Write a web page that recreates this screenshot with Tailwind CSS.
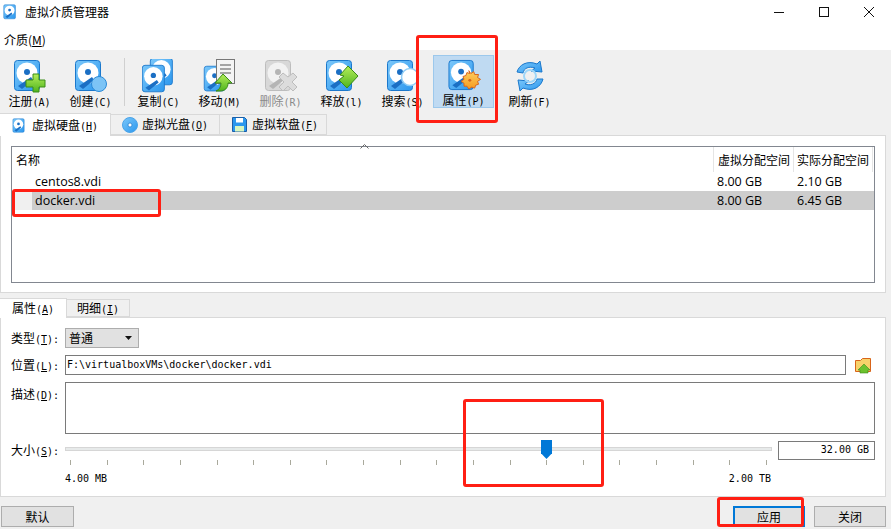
<!DOCTYPE html>
<html lang="zh">
<head>
<meta charset="utf-8">
<script src="https://cdn.jsdelivr.net/npm/@tailwindcss/browser@4"></script>
</head>
<body class="relative w-[891px] h-[529px] overflow-hidden bg-[#f0f0f0] text-[12px] leading-none text-black font-['Noto_Sans_CJK_SC','Noto_Sans',sans-serif]">
<svg class="absolute w-0 h-0">
  <defs>
    <linearGradient id="g" x1="0" y1="0" x2="1" y2="1"><stop offset="0" stop-color="#7cc8fa"/><stop offset="1" stop-color="#2b97ee"/></linearGradient>
    <linearGradient id="gr" x1="0" y1="0" x2="0" y2="1"><stop offset="0" stop-color="#b5ee5a"/><stop offset="1" stop-color="#4fb41e"/></linearGradient>
    <linearGradient id="o" x1="0" y1="0" x2="0" y2="1"><stop offset="0" stop-color="#ffd060"/><stop offset="1" stop-color="#f59a20"/></linearGradient>
    <symbol id="disk" viewBox="0 0 34 34">
      <rect x="1.5" y="1.5" width="25" height="30" rx="3" fill="url(#g)" stroke="#1b78cc"/>
      <circle cx="14" cy="14" r="10.5" fill="#fff"/>
      <circle cx="14" cy="13" r="3" fill="#1b6fc4"/>
      <path d="M5 27 L18 18 L20 21 L9 30 Z" fill="#1b6fc4"/>
    </symbol>
  </defs>
</svg>

<!-- title bar -->
<header class="h-[30px] bg-white flex items-center pl-[3px] pb-[6px] gap-[6px]">
  <svg class="w-[16px] h-[16px]" viewBox="0 0 34 34"><use href="#disk"/></svg>
  <span>虚拟介质管理器</span>
  <div class="ml-auto flex items-center mr-[17px] gap-[35px]">
    <svg class="w-[10px] h-[10px]" viewBox="0 0 10 10"><path d="M0 5.5H10" stroke="#111" fill="none"/></svg>
    <svg class="w-[10px] h-[10px]" viewBox="0 0 10 10"><rect x=".5" y=".5" width="9" height="9" stroke="#111" fill="none"/></svg>
    <svg class="w-[10px] h-[10px]" viewBox="0 0 10 10"><path d="M0 0L10 10M10 0L0 10" stroke="#111" fill="none"/></svg>
  </div>
</header>
<!-- menu -->
<nav class="h-[20px] bg-white pl-[4px] flex items-center"><span>介质(<span class="underline">M</span>)</span></nav>

<!-- toolbar -->
<div class="h-[63px] flex pt-[5px] items-start ml-[-1px]">
  <div class="w-[61px] h-[53px] flex flex-col items-center pt-[4px]">
    <svg class="w-[34px] h-[34px]" viewBox="0 0 34 34"><use href="#disk"/><path d="M20 15h6v6h6v7h-6v5h-6v-5h-7v-7h7z" fill="url(#gr)" stroke="#3b8c18"/></svg>
    <span class="mt-[2px] whitespace-nowrap">注册<span class="font-['DejaVu_Sans_Mono'] text-[10px]">(A)</span></span>
  </div>
  <div class="w-[61px] h-[53px] flex flex-col items-center pt-[4px]">
    <svg class="w-[34px] h-[34px]" viewBox="0 0 34 34"><use href="#disk"/><circle cx="25" cy="25" r="7.5" fill="#7cc4f6" stroke="#2b8ad8"/></svg>
    <span class="mt-[2px] whitespace-nowrap">创建<span class="font-['DejaVu_Sans_Mono'] text-[10px]">(C)</span></span>
  </div>
  <div class="w-[1px] h-[48px] bg-[#d0d0d0] ml-[3px] mr-[3px] mt-[3px]"></div>
  <div class="w-[61px] h-[53px] flex flex-col items-center pt-[4px]">
    <svg class="w-[34px] h-[34px]" viewBox="0 0 34 34"><svg x="7" y="-2" width="30" height="30" viewBox="0 0 34 34"><use href="#disk"/></svg><svg x="-1" y="5" width="30" height="30" viewBox="0 0 34 34"><use href="#disk"/></svg></svg>
    <span class="mt-[2px] whitespace-nowrap">复制<span class="font-['DejaVu_Sans_Mono'] text-[10px]">(C)</span></span>
  </div>
  <div class="w-[61px] h-[53px] flex flex-col items-center pt-[4px]">
    <svg class="w-[34px] h-[34px]" viewBox="0 0 34 34"><svg x="0" y="6" width="28" height="28" viewBox="0 0 34 34"><use href="#disk"/></svg><rect x="13.5" y=".5" width="18" height="24" fill="#f4f4f4" stroke="#777"/><path d="M17 6h11M17 10h11M17 14h11" stroke="#555"/><path d="M12 24l8-9 9 9h-4c0 5-3 8-8 8h-4c3-1 5-4 5-8z" fill="url(#gr)" stroke="#3b8c18"/></svg>
    <span class="mt-[2px] whitespace-nowrap">移动<span class="font-['DejaVu_Sans_Mono'] text-[10px]">(M)</span></span>
  </div>
  <div class="w-[61px] h-[53px] flex flex-col items-center pt-[4px] text-[#8a8a8a]">
    <svg class="w-[34px] h-[34px]" viewBox="0 0 34 34"><rect x="1.5" y="1.5" width="25" height="30" rx="3" fill="#d8d8d8" stroke="#bdbdbd"/><circle cx="14" cy="14" r="10.5" fill="#f2f2f2"/><circle cx="14" cy="13" r="3" fill="#b5b5b5"/><path d="M5 27 L18 18 L20 21 L9 30 Z" fill="#b5b5b5"/><path d="M19 14l5 4 5-4 4 4-5 5 5 5-4 4-5-5-5 5-4-4 5-5-5-5z" fill="#dcdcdc" stroke="#bdbdbd"/></svg>
    <span class="mt-[2px] whitespace-nowrap">删除<span class="font-['DejaVu_Sans_Mono'] text-[10px]">(R)</span></span>
  </div>
  <div class="w-[61px] h-[53px] flex flex-col items-center pt-[4px]">
    <svg class="w-[34px] h-[34px]" viewBox="0 0 34 34"><use href="#disk"/><path d="M23 7l10 10-11 12-8-8 5-4-4-1z" fill="url(#gr)" stroke="#3b8c18"/></svg>
    <span class="mt-[2px] whitespace-nowrap">释放<span class="font-['DejaVu_Sans_Mono'] text-[10px]">(l)</span></span>
  </div>
  <div class="w-[61px] h-[53px] flex flex-col items-center pt-[4px]">
    <svg class="w-[34px] h-[34px]" viewBox="0 0 34 34"><use href="#disk"/><circle cx="24" cy="18" r="8.5" fill="#fff" stroke="#8fcdf5" stroke-width="1.5"/></svg>
    <span class="mt-[2px] whitespace-nowrap">搜索<span class="font-['DejaVu_Sans_Mono'] text-[10px]">(S)</span></span>
  </div>
  <div class="w-[61px] h-[53px] flex flex-col items-center pt-[4px] bg-[#bfdaf2] border border-[#9cc8ec] box-border">
    <svg class="w-[34px] h-[34px] mt-[-1px]" viewBox="0 0 34 34"><use href="#disk"/><path d="M22 12l2 3 3-2 1 3 4 0-1 3 3 2-3 2 1 3-3 1-1 3-3-1-3 2-2-3-3 0 0-3-3-2 3-2-1-3 3-1 1-3 3 1z" fill="url(#o)" stroke="#d8641a"/><circle cx="23" cy="22" r="1.5" fill="#d8641a"/></svg>
    <span class="mt-[2px] whitespace-nowrap">属性<span class="font-['DejaVu_Sans_Mono'] text-[10px]">(P)</span></span>
  </div>
  <div class="w-[71px] h-[53px] flex flex-col items-center pt-[4px]">
    <svg class="w-[34px] h-[34px]" viewBox="0 0 34 34"><path d="M4 13C6 6 14 1 24 5l3-3 2 11-11-1 4-3C16 7 11 9 10 14z" fill="url(#g)" stroke="#1b78cc"/><path d="M30 20C28 28 20 33 10 29l-3 3-2-11 11 1-4 3c5 2 11 0 12-5z" fill="url(#g)" stroke="#1b78cc"/><circle cx="17" cy="17" r="6" fill="none" stroke="#9ed6f8" stroke-width="2"/></svg>
    <span class="mt-[2px] whitespace-nowrap">刷新<span class="font-['DejaVu_Sans_Mono'] text-[10px]">(F)</span></span>
  </div>
</div>

<!-- media tabs -->
<div class="h-[22px] flex items-end relative z-10">
  <div class="w-[111px] h-[23px] bg-white border-t border-r border-[#d9d9d9] flex items-center pl-[12px] gap-[7px] mb-[-1px]">
    <svg class="w-[13px] h-[15px]" viewBox="0 0 28 33"><use href="#disk" width="34" height="34"/></svg>
    <span>虚拟硬盘<span class="font-['DejaVu_Sans_Mono'] text-[10px]">(<span class="underline">H</span>)</span></span>
  </div>
  <div class="w-[109px] h-[21px] border-t border-r border-b border-[#d9d9d9] flex items-center pl-[11px] gap-[4px]">
    <svg class="w-[16px] h-[16px]" viewBox="0 0 16 16"><circle cx="8" cy="8" r="7.5" fill="url(#g)" stroke="#4aa3e8"/><circle cx="8" cy="8" r="2" fill="#fff" stroke="#1b78cc" stroke-width=".7"/></svg>
    <span>虚拟光盘<span class="font-['DejaVu_Sans_Mono'] text-[10px]">(<span class="underline">O</span>)</span></span>
  </div>
  <div class="w-[107px] h-[21px] border-t border-r border-b border-[#d9d9d9] flex items-center pl-[12px] gap-[5px]">
    <svg class="w-[15px] h-[15px]" viewBox="0 0 15 15"><path d="M.5.5h12l2 2v12H.5z" fill="#2b97ee" stroke="#1b5fa8"/><rect x="4" y="1" width="7" height="4.5" fill="#fff"/><rect x="3" y="9" width="9" height="5.5" fill="#d8f5c0"/></svg>
    <span>虚拟软盘<span class="font-['DejaVu_Sans_Mono'] text-[10px]">(<span class="underline">F</span>)</span></span>
  </div>
</div>

<!-- media list panel -->
<section class="h-[158px] w-[886px] bg-white border border-[#d9d9d9] pt-[10px] pl-[10px]">
  <div class="relative w-[864px] h-[137px] border border-[#828790] box-border">
    <div class="absolute top-[-3px] left-[348px]"><svg class="block w-[9px] h-[5px]" viewBox="0 0 9 5"><path d="M.5 4.5L4.5.5l4 4" fill="none" stroke="#666"/></svg></div>
    <div class="h-[25px] flex items-center">
      <span class="w-[701px] pl-[4px]">名称</span>
      <span class="w-[80px] h-full border-l border-[#e5e5e5] flex items-center pl-[4px] whitespace-nowrap">虚拟分配空间</span>
      <span class="w-[80px] h-full border-l border-r border-[#e5e5e5] flex items-center pl-[3px] whitespace-nowrap">实际分配空间</span>
    </div>
    <div class="h-[19px] pt-[1px] flex items-center text-[12.5px] font-['Open_Sans']">
      <span class="w-[701px] pl-[23px]">centos8.vdi</span><span class="w-[80px] pl-[4px]">8.00 GB</span><span class="pl-[4px]">2.10 GB</span>
    </div>
    <div class="h-[19px] pt-[1px] flex items-center text-[12.5px] font-['Open_Sans'] bg-[linear-gradient(90deg,#f0f0f0_20px,#cdcdcd_20px)]">
      <span class="w-[701px] pl-[23px]">docker.vdi</span><span class="w-[80px] pl-[4px]">8.00 GB</span><span class="pl-[4px]">6.45 GB</span>
    </div>
  </div>
</section>

<!-- details tabs -->
<div class="mt-[5px] h-[19px] flex items-end relative z-10">
  <div class="w-[67px] h-[20px] bg-white border-t border-r border-[#d9d9d9] flex items-center pl-[12px] mb-[-1px]"><span>属性<span class="font-['DejaVu_Sans_Mono'] text-[10px]">(<span class="underline">A</span>)</span></span></div>
  <div class="w-[63px] h-[18px] border-t border-r border-b border-[#d9d9d9] flex items-center pl-[10px]"><span>明细<span class="font-['DejaVu_Sans_Mono'] text-[10px]">(<span class="underline">I</span>)</span></span></div>
</div>

<!-- details panel -->
<section class="relative w-[886px] h-[180px] bg-white border border-[#d9d9d9] pl-[10px] pt-[10px]">
  <div class="h-[20px] flex items-center">
    <span class="w-[54px] whitespace-nowrap">类型<span class="font-['DejaVu_Sans_Mono'] text-[10px]">(<span class="underline">T</span>):</span></span>
    <div class="w-[74px] h-[20px] bg-[#e1e1e1] border border-[#adadad] flex items-center pl-[3px]"><span>普通</span><svg class="ml-auto mr-[6px] w-[7px] h-[4px]" viewBox="0 0 7 4"><path d="M0 0h7L3.5 4z" fill="#111"/></svg></div>
  </div>
  <div class="mt-[7px] h-[20px] flex items-center">
    <span class="w-[54px] whitespace-nowrap">位置<span class="font-['DejaVu_Sans_Mono'] text-[10px]">(<span class="underline">L</span>):</span></span>
    <div class="w-[781px] h-[20px] border border-[#7a7a7a] flex items-center pl-[1px] font-['DejaVu_Sans_Mono'] text-[10px]">F:\virtualboxVMs\docker\docker.vdi</div>
    <svg class="ml-[9px] w-[17px] h-[17px]" viewBox="0 0 17 17"><path d="M.5 3.5h5l2-2h8v13H.5z" fill="#f7d26a" stroke="#d8641a"/><path d="M9 7l6 6h-2v3H5v-3H3z" fill="#6cc22e" stroke="#3b8c18" stroke-width=".6"/></svg>
  </div>
  <div class="mt-[7px] h-[52px] flex items-start">
    <span class="w-[54px] mt-[6px] whitespace-nowrap">描述<span class="font-['DejaVu_Sans_Mono'] text-[10px]">(<span class="underline">D</span>):</span></span>
    <div class="w-[810px] h-[52px] border border-[#7a7a7a]"></div>
  </div>
  <div class="relative mt-[6px] h-[20px] flex items-center">
    <span class="w-[54px] whitespace-nowrap">大小<span class="font-['DejaVu_Sans_Mono'] text-[10px]">(<span class="underline">S</span>):</span></span>
    <div class="relative w-[707px] h-[4px] mt-[-2px] bg-[#e7eaea] border border-[#d6d6d6]"></div>
    <div class="ml-[6px] w-[97px] h-[19px] border border-[#7a7a7a] flex items-center justify-end pr-[5px] font-['DejaVu_Sans_Mono'] text-[10px]">32.00 GB</div>
    <div class="absolute left-[530px] top-0 w-[11px] h-[19px] bg-[#0078d7] [clip-path:polygon(0_0,100%_0,100%_70%,50%_100%,0_70%)]"></div>
  </div>
  <div class="ml-[59px] w-[697px] flex justify-between h-[5px]">
    <i class="w-px bg-[#a9a99c]"></i><i class="w-px bg-[#a9a99c]"></i><i class="w-px bg-[#a9a99c]"></i><i class="w-px bg-[#a9a99c]"></i><i class="w-px bg-[#a9a99c]"></i><i class="w-px bg-[#a9a99c]"></i><i class="w-px bg-[#a9a99c]"></i><i class="w-px bg-[#a9a99c]"></i><i class="w-px bg-[#a9a99c]"></i><i class="w-px bg-[#a9a99c]"></i><i class="w-px bg-[#a9a99c]"></i><i class="w-px bg-[#a9a99c]"></i><i class="w-px bg-[#a9a99c]"></i><i class="w-px bg-[#a9a99c]"></i><i class="w-px bg-[#a9a99c]"></i><i class="w-px bg-[#a9a99c]"></i><i class="w-px bg-[#a9a99c]"></i><i class="w-px bg-[#a9a99c]"></i><i class="w-px bg-[#a9a99c]"></i><i class="w-px bg-[#a9a99c]"></i>
  </div>
  <div class="ml-[54px] w-[706px] flex justify-between mt-[9px] font-['DejaVu_Sans_Mono'] text-[10px]"><span>4.00 MB</span><span>2.00 TB</span></div>
</section>

<!-- buttons -->
<footer class="mt-[9px] flex pl-[1px] h-[21px]">
  <div class="w-[73px] h-[21px] bg-[#e1e1e1] border border-[#adadad] flex items-center justify-center">默认</div>
  <div class="ml-[659px] w-[72px] h-[21px] bg-[#e1e1e1] border-2 border-[#0078d7] flex items-center justify-center">应用</div>
  <div class="ml-[9px] w-[72px] h-[21px] bg-[#e1e1e1] border border-[#adadad] flex items-center justify-center">关闭</div>
</footer>

<!-- red annotations -->
<div class="absolute left-[416px] top-[35px] w-[82px] h-[88px] border-[3px] border-[#ff1f14] rounded-[3px]"></div>
<div class="absolute left-[12px] top-[189px] w-[149px] h-[28px] border-[3px] border-[#ff1f14] rounded-[3px]"></div>
<div class="absolute left-[463px] top-[399px] w-[141px] h-[88px] border-[3px] border-[#ff1f14] rounded-[3px]"></div>
<div class="absolute left-[717px] top-[497px] w-[87px] h-[30px] border-[3px] border-[#ff1f14] rounded-[3px]"></div>
</body>
</html>
